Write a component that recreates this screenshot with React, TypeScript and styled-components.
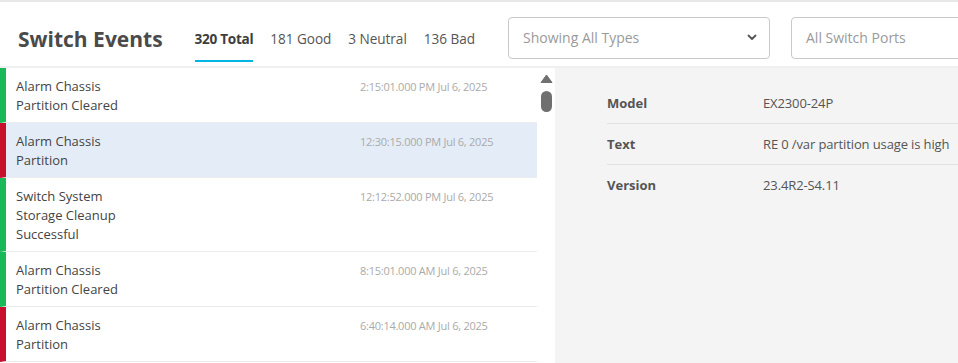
import React from "react";
import styled, { createGlobalStyle } from "styled-components";

const GlobalStyle = createGlobalStyle`
  html, body {
    margin: 0;
    padding: 0;
    background: #fff;
    overflow: hidden;
  }
  body {
    font-family: "Open Sans", "Liberation Sans", sans-serif;
    color: #4a4a4a;
  }
`

const Page = styled.div`
  width: 958px;
  height: 363px;
  overflow: hidden;
  display: flex;
  flex-direction: column;
`

const Header = styled.header`
  display: flex;
  height: 64px;
  flex-shrink: 0;
  border-top: 2px solid #e8e8e8;
  border-bottom: 2px solid #f0f0f0;
`

const HeaderLeft = styled.div`
  flex: 0 0 490px;
  display: flex;
  padding-left: 18px;
  box-sizing: border-box;
`

const Title = styled.h1`
  margin: 0;
  align-self: center;
  margin-top: 9px;
  font-size: 21px;
  font-weight: 700;
  color: #4a4a4a;
  margin-right: 32px;
  white-space: nowrap;
`

const Tabs = styled.nav`
  display: flex;
  gap: 17px;
  margin-bottom: 4px;
`

const Tab = styled.div<{ $active?: boolean }>`
  display: flex;
  align-items: center;
  padding-top: 14px;
  font-size: 13.6px;
  font-weight: ${p => (p.$active ? 700 : 400)};
  letter-spacing: ${p => (p.$active ? "-0.3px" : "-0.05px")};
  color: ${p => (p.$active ? "#3d3d3d" : "#555")};
  border-bottom: 2px solid ${p => (p.$active ? "#00b4e4" : "transparent")};
  white-space: nowrap;
`

const Selects = styled.div`
  display: flex;
  gap: 21px;
  margin-left: 18px;
  padding-top: 15px;
`

const Select = styled.div`
  width: 262px;
  height: 42px;
  box-sizing: border-box;
  flex-shrink: 0;
  border: 1px solid #c9c9c9;
  border-radius: 4px;
  display: flex;
  align-items: center;
  justify-content: space-between;
  padding: 0 12px 1px 14px;
  font-size: 14px;
  color: #9a9a9a;
  background: #fff;
`

const Body = styled.div`
  flex: 1;
  display: flex;
  min-height: 0;
`

const ListPane = styled.div`
  display: flex;
  flex: 0 0 555px;
  background: #fff;
`

const List = styled.div`
  width: 537px;
`

const Row = styled.div<{ $status: "good" | "bad"; $selected?: boolean }>`
  display: flex;
  padding: 9px 0 7px 10px;
  border-left: 6px solid ${p => (p.$status === "good" ? "#19b95a" : "#c8102e")};
  border-bottom: 1px solid #ececec;
  background: ${p => (p.$selected ? "#e4edf7" : "#fff")};
`

const EventName = styled.div`
  width: 344px;
  font-size: 13px;
  line-height: 19px;
  color: #444;
`

const Stamp = styled.div`
  font-size: 11px;
  line-height: 19px;
  letter-spacing: -0.25px;
  color: #aaa;
  white-space: nowrap;
`

const ScrollBar = styled.div`
  width: 18px;
  display: flex;
  flex-direction: column;
  align-items: center;
  padding-top: 6px;
  gap: 8px;
`

const Thumb = styled.div`
  width: 11px;
  height: 21px;
  border-radius: 6px;
  background: #707070;
`

const Details = styled.div`
  flex: 1;
  background: #f4f4f4;
  padding: 15px 0 0 52px;
`

const DetailRow = styled.div`
  display: flex;
  align-items: center;
  height: 40px;
  border-bottom: 1px solid #e2e2e2;
  font-size: 13px;
  color: #555;
  white-space: nowrap;

  &:last-child {
    border-bottom: none;
  }
`

const Label = styled.div`
  width: 156px;
  font-weight: 700;
  color: #555;
`

const Value = styled.div`
  color: #555;
  letter-spacing: -0.12px;
`

const Chevron = () => (
  <svg width="10" height="7" viewBox="0 0 10 7">
    <polyline points="1.5,1.5 5,5 8.5,1.5" fill="none" stroke="#555" strokeWidth="1.8" strokeLinecap="round" strokeLinejoin="round" />
  </svg>
)

const UpArrow = () => (
  <svg width="13" height="9" viewBox="0 0 13 9">
    <path d="M6.5 1 L12 8.5 L1 8.5 Z" fill="#707070" stroke="#707070" strokeWidth="1" strokeLinejoin="round" />
  </svg>
)

const events: { lines: string[]; time: string; status: "good" | "bad"; selected?: boolean }[] = [
  { lines: ["Alarm Chassis", "Partition Cleared"], time: "2:15:01.000 PM Jul 6, 2025", status: "good" },
  { lines: ["Alarm Chassis", "Partition"], time: "12:30:15.000 PM Jul 6, 2025", status: "bad", selected: true },
  { lines: ["Switch System", "Storage Cleanup", "Successful"], time: "12:12:52.000 PM Jul 6, 2025", status: "good" },
  { lines: ["Alarm Chassis", "Partition Cleared"], time: "8:15:01.000 AM Jul 6, 2025", status: "good" },
  { lines: ["Alarm Chassis", "Partition"], time: "6:40:14.000 AM Jul 6, 2025", status: "bad" },
]

const details = [
  ["Model", "EX2300-24P"],
  ["Text", "RE 0 /var partition usage is high"],
  ["Version", "23.4R2-S4.11"],
]

export default function App() {
  return (
    <Page>
      <GlobalStyle />
      <Header>
        <HeaderLeft>
          <Title>Switch Events</Title>
          <Tabs>
            <Tab $active>320 Total</Tab>
            <Tab>181 Good</Tab>
            <Tab>3 Neutral</Tab>
            <Tab>136 Bad</Tab>
          </Tabs>
        </HeaderLeft>
        <Selects>
          <Select>
            <span>Showing All Types</span>
            <Chevron />
          </Select>
          <Select>
            <span>All Switch Ports</span>
          </Select>
        </Selects>
      </Header>
      <Body>
        <ListPane>
          <List>
            {events.map((e, i) => (
              <Row key={i} $status={e.status} $selected={e.selected}>
                <EventName>
                  {e.lines.map(l => (
                    <div key={l}>{l}</div>
                  ))}
                </EventName>
                <Stamp>{e.time}</Stamp>
              </Row>
            ))}
          </List>
          <ScrollBar>
            <UpArrow />
            <Thumb />
          </ScrollBar>
        </ListPane>
        <Details>
          {details.map(([k, v]) => (
            <DetailRow key={k}>
              <Label>{k}</Label>
              <Value>{v}</Value>
            </DetailRow>
          ))}
        </Details>
      </Body>
    </Page>
  );
}
